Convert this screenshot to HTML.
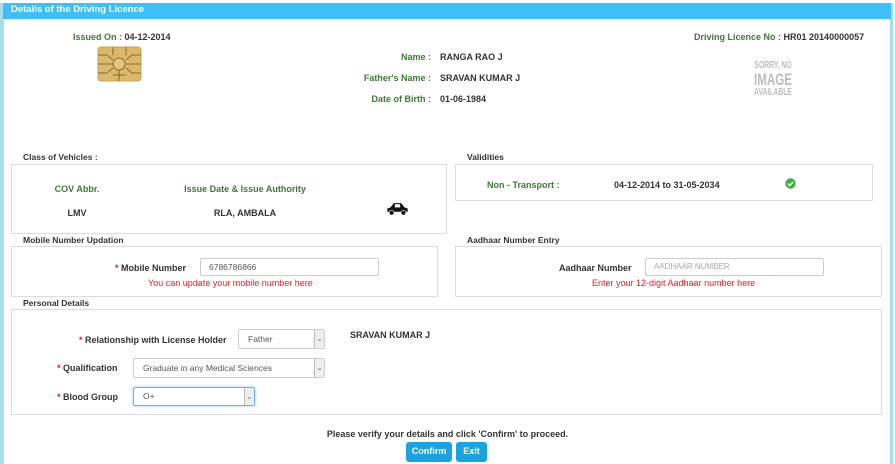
<!DOCTYPE html>
<html><head><meta charset="utf-8"><style>
*{box-sizing:border-box;margin:0;padding:0}
body{width:895px;height:464px;background:#fff;font-family:"Liberation Sans",Arial,sans-serif;font-size:9px;color:#333;position:relative;overflow:hidden}
.a{position:absolute;white-space:nowrap}
.b{font-weight:bold}
.g{color:#3f7a36;font-weight:bold}
.box{position:absolute;border:1px solid #ddd}
.lg{position:absolute;background:#fff;padding:0 4px;font-weight:bold;color:#333;font-size:8.5px}
.red{color:#e0202a}
.inp{position:absolute;border:1px solid #ccc;border-radius:2px;background:#fff;color:#555;padding-left:8px;line-height:16px;font-size:8.5px}
.sel{position:absolute;border:1px solid #ccc;border-radius:2px;background:#fff;color:#555;padding-left:9px;font-size:8.5px}
.sel i{position:absolute;right:0;top:0;bottom:0;width:10px;border-left:1px solid #bbb;background:#eee;font-style:normal;font-size:8px;text-align:center;color:#777}
.btn{position:absolute;background:#1aa3e0;color:#fff;font-weight:bold;text-align:center;border-radius:3px;line-height:19px;font-size:9px}
</style></head><body>
<div class="a" style="left:0;top:3px;width:4px;height:461px;background:#a9dcec"></div>
<div class="a" style="left:890px;top:3px;width:3px;height:461px;background:#a9dcec"></div>
<div class="a" style="left:3px;top:3px;width:888px;height:16px;background:#3fbff6;color:#fff;font-size:9.5px;padding-left:8px;line-height:14px;font-weight:bold">Details of the Driving Licence</div>

<div class="a g" style="left:73px;top:32px">Issued On : <span style="color:#333">04-12-2014</span></div>
<svg class="a" style="left:97px;top:46px" width="45" height="36" viewBox="0 0 45 36">
<rect x="1" y="1" width="43" height="34" rx="3" fill="#dcb96a" stroke="#c9a45a"/>
<circle cx="22" cy="18" r="6" fill="#e3c57c" stroke="#6b5020" stroke-width=".8"/>
<path d="M1 9h9l6 5M1 18h15M1 27h9l6-5M44 9h-9l-6 5M44 18h-15M44 27h-9l-6-5M16 1v8M29 1v8M22 24v11M16 29h13" fill="none" stroke="#6b5020" stroke-width=".8"/>
</svg>
<div class="a g" style="left:331px;top:52px;width:100px;text-align:right">Name :</div>
<div class="a b" style="left:440px;top:52px">RANGA RAO J</div>
<div class="a g" style="left:331px;top:73px;width:100px;text-align:right">Father's Name :</div>
<div class="a b" style="left:440px;top:73px">SRAVAN KUMAR J</div>
<div class="a g" style="left:331px;top:94px;width:100px;text-align:right">Date of Birth :</div>
<div class="a b" style="left:440px;top:94px">01-06-1984</div>
<div class="a g" style="left:694px;top:32px">Driving Licence No : <span style="color:#333">HR01 20140000057</span></div>
<div class="a" style="left:742px;top:61px;width:62px;text-align:center;color:#bdbdbd;font-weight:bold;line-height:1;transform:scaleX(0.68);transform-origin:center"><div style="font-size:10px">SORRY, NO</div><div style="font-size:17px;line-height:17px">IMAGE</div><div style="font-size:10px">AVAILABLE</div></div>

<div class="box" style="left:11px;top:164px;width:436px;height:70px"></div>
<div class="lg" style="left:19px;top:152px">Class of Vehicles :</div>
<div class="a g" style="left:37px;top:184px;width:80px;text-align:center">COV Abbr.</div>
<div class="a g" style="left:165px;top:184px;width:160px;text-align:center">Issue Date &amp; Issue Authority</div>
<div class="a b" style="left:37px;top:208px;width:80px;text-align:center">LMV</div>
<div class="a b" style="left:165px;top:208px;width:160px;text-align:center">RLA, AMBALA</div>
<svg class="a" style="left:386px;top:201px" width="23" height="15" viewBox="0 0 21 14"><path d="M1 10V7l3-1 3-4h7l3 4 3 1v3z" fill="#111"/><rect x="8" y="3" width="5" height="3" fill="#fff"/><circle cx="5" cy="11" r="2.3" fill="#111" stroke="#fff" stroke-width=".6"/><circle cx="16" cy="11" r="2.3" fill="#111" stroke="#fff" stroke-width=".6"/></svg>

<div class="box" style="left:455px;top:164px;width:418px;height:37px"></div>
<div class="lg" style="left:463px;top:152px">Validities</div>
<div class="a g" style="left:487px;top:180px">Non - Transport :</div>
<div class="a b" style="left:614px;top:180px">04-12-2014 to 31-05-2034</div>
<svg class="a" style="left:785px;top:178px" width="11" height="11" viewBox="0 0 11 11"><circle cx="5.5" cy="5.5" r="5.2" fill="#3cb043"/><path d="M3 5.7l1.8 1.8L8 4" fill="none" stroke="#fff" stroke-width="1.5"/></svg>

<div class="box" style="left:11px;top:246px;width:427px;height:51px"></div>
<div class="lg" style="left:19px;top:235px">Mobile Number Updation</div>
<div class="a b" style="left:115px;top:263px"><span class="red">*</span> Mobile Number</div>
<div class="inp" style="left:200px;top:258px;width:179px;height:18px">6786786866</div>
<div class="a red" style="left:148px;top:278px">You can update your mobile number here</div>

<div class="box" style="left:455px;top:246px;width:427px;height:51px"></div>
<div class="lg" style="left:463px;top:235px">Aadhaar Number Entry</div>
<div class="a b" style="left:559px;top:263px">Aadhaar Number</div>
<div class="inp" style="left:645px;top:258px;width:179px;height:18px;color:#aaa;font-size:8px">AADHAAR NUMBER</div>
<div class="a red" style="left:592px;top:278px">Enter your 12-digit Aadhaar number here</div>

<div class="box" style="left:11px;top:309px;width:871px;height:106px"></div>
<div class="lg" style="left:19px;top:298px">Personal Details</div>
<div class="a b" style="left:79px;top:335px"><span class="red">*</span> Relationship with License Holder</div>
<div class="sel" style="left:238px;top:329px;width:87px;height:20px;line-height:18px">Father<i>⌄</i></div>
<div class="a b" style="left:350px;top:330px">SRAVAN KUMAR J</div>
<div class="a b" style="left:57px;top:363px"><span class="red">*</span> Qualification</div>
<div class="sel" style="left:133px;top:358px;width:192px;height:20px;line-height:18px">Graduate in any Medical Sciences<i>⌄</i></div>
<div class="a b" style="left:57px;top:392px"><span class="red">*</span> Blood Group</div>
<div class="sel" style="left:133px;top:387px;width:122px;height:19px;line-height:17px;border-color:#66afe9;box-shadow:0 0 3px #9cd0f5">O+<i>⌄</i></div>

<div class="a b" style="left:0;top:429px;width:895px;text-align:center">Please verify your details and click 'Confirm' to proceed.</div>
<div class="btn" style="left:406px;top:442px;width:46px;height:20px">Confirm</div>
<div class="btn" style="left:456px;top:442px;width:31px;height:20px">Exit</div>
</body></html>
